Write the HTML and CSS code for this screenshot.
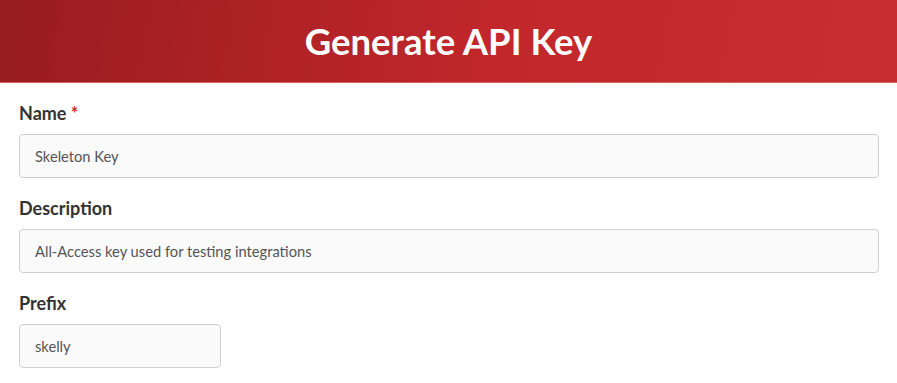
FILE: index.html
```html
<!DOCTYPE html>
<html lang="en">
<head>
    <meta charset="UTF-8">
    <title>Generate API Key</title>
    <link rel="stylesheet" href="styles.css">
</head>
<body>
<div class="header">
    <h1>Generate API Key</h1>
</div>

<form class="key-form">
    <div class="field">
        <label for="name">Name <span class="required">*</span></label>
        <input type="text" id="name" name="name" value="Skeleton Key">
    </div>
    <div class="field">
        <label for="description">Description</label>
        <input type="text" id="description" name="description" value="All-Access key used for testing integrations">
    </div>
    <div class="field">
        <label for="prefix">Prefix</label>
        <input type="text" id="prefix" name="prefix" class="short" value="skelly">
    </div>
</form>
</body>
</html>
```

FILE: styles.css
```css
body {
    font-family: 'Lato', sans-serif;
    margin: 0;
    background: #ffffff;
    color: #333;
}

.header {
    height: 82px;
    display: flex;
    align-items: center;
    justify-content: center;
    background: linear-gradient(100deg, #981c1f, #c1272b 55%, #c92f30);
    border-bottom: 1px solid #e0605f;
}

.header h1 {
    margin: 0;
    color: #fff;
    font-size: 36.5px;
    font-weight: 700;
}

.key-form {
    padding: 18px 18px 0 19px;
}

.field {
    margin-bottom: 18px;
}

label {
    display: block;
    font-size: 18px;
    font-weight: 700;
    line-height: 24px;
    margin-bottom: 9px;
    color: #333;
}

.required {
    color: #c9302c;
}

input {
    display: block;
    box-sizing: border-box;
    width: 100%;
    height: 44px;
    padding: 0 15px;
    font-family: 'Lato', sans-serif;
    font-size: 14.7px;
    color: #555;
    background: #fafafa;
    border: 1px solid #cfcfcf;
    border-radius: 4px;
}

input.short {
    width: 202px;
}
```
